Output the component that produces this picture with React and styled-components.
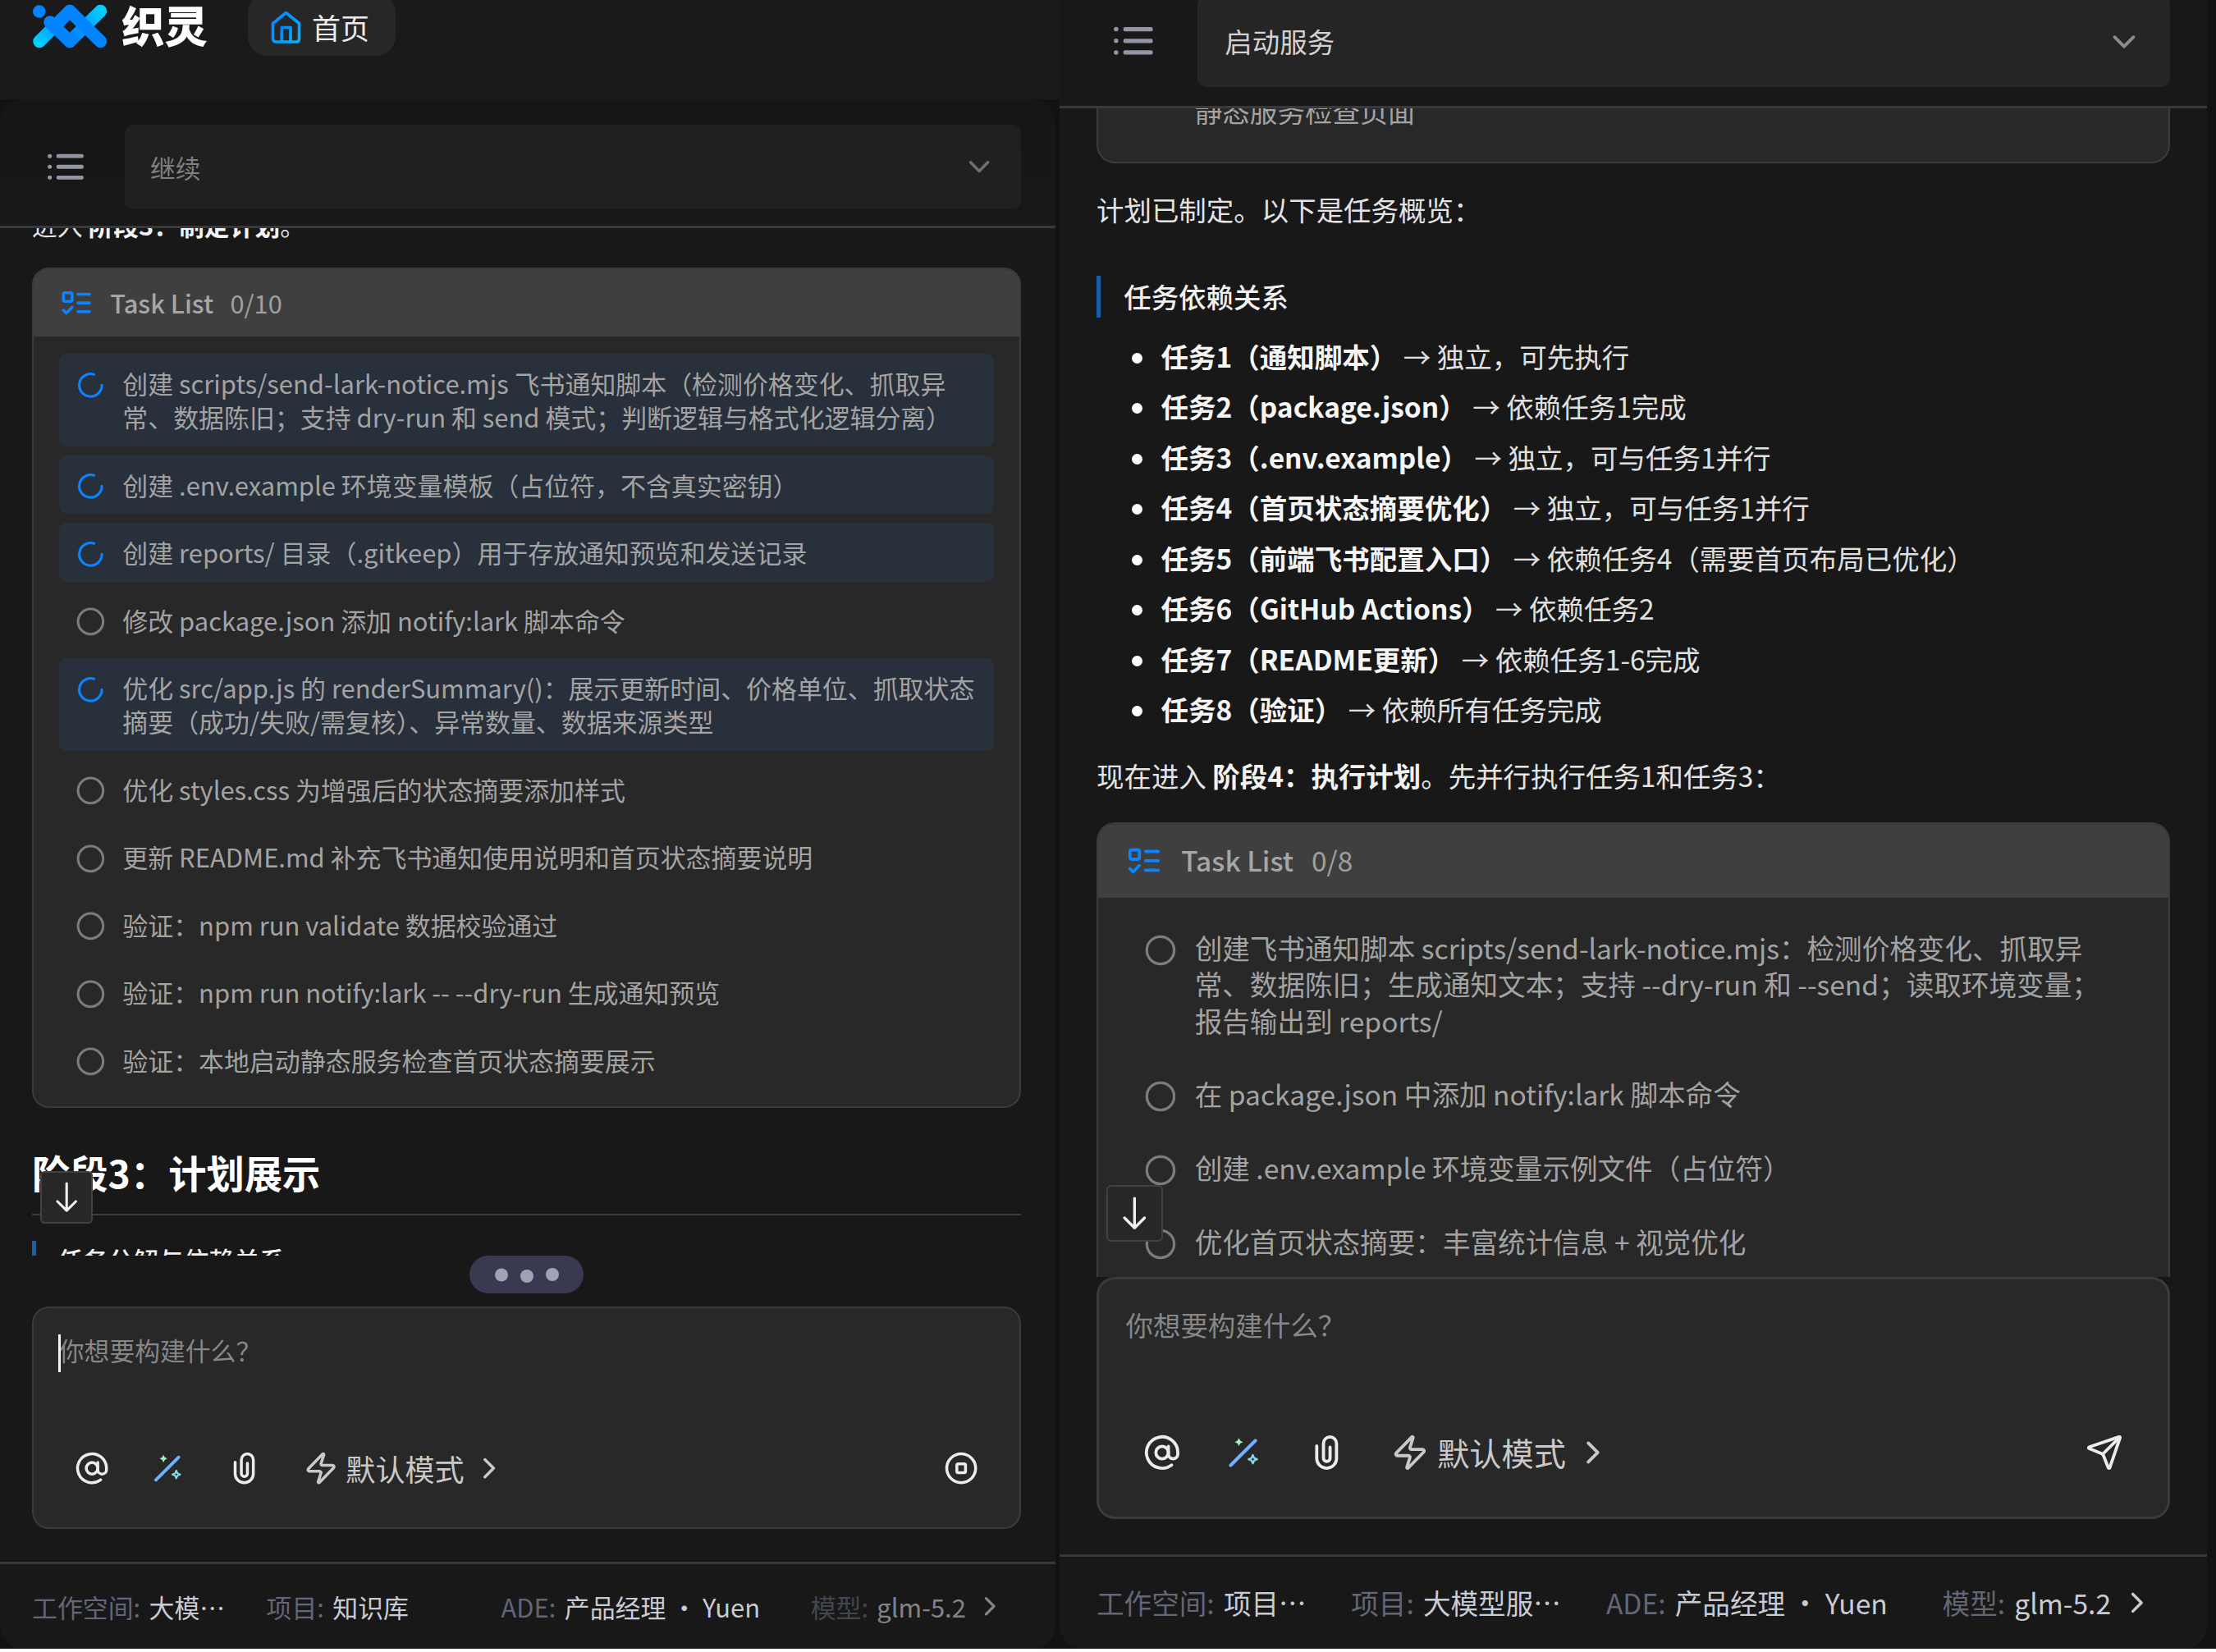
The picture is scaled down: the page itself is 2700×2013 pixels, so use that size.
import React from "react";
import styled, { createGlobalStyle, css, ThemeProvider } from "styled-components";
import {
  AtSign,
  ChevronDown,
  ChevronRight,
  Circle,
  CircleStop,
  LoaderCircle,
  Send,
  Zap,
} from "lucide-react";

/* Every size inside a pane is a multiple of the pane's unit. */
const u = (n) => ({ theme }) => `${(n * theme.unit).toFixed(2)}px`;

const Global = createGlobalStyle`
  *, *::before, *::after { box-sizing: border-box; }
  html, body { margin: 0; padding: 0; background: #fff; overflow: hidden; }
  body { font-family: "Noto Sans CJK SC", "Noto Sans", sans-serif; color: #e6e6e6; }
`;

const Screen = styled.main`
  width: 2700px;
  height: 2009px;
  display: flex;
  gap: 5px;
  overflow: hidden;
  background: #121212;
`;

const LeftColumn = styled.div`
  width: 1286px;
  flex: none;
  display: flex;
  flex-direction: column;
`;

const RightColumn = styled.div`
  width: 1398px;
  height: 2048px;
  flex: none;
  display: flex;
  margin-top: -39px;
`;

const Header = styled.header`
  width: 1291px;
  height: 121px;
  flex: none;
  display: flex;
  align-items: flex-start;
  padding-left: 40px;
  background: #1a1a1a;
`;

const Brand = styled.div`
  display: flex;
  align-items: flex-start;
  gap: 16px;
  height: 64px;
`;

const Wordmark = styled.span`
  font-size: 52.5px;
  font-weight: 900;
  line-height: 59px;
  color: #fff;
`;

const HomePill = styled.a`
  display: flex;
  align-items: center;
  gap: 13px;
  width: 180px;
  height: 76px;
  margin: -8px 0 0 49px;
  padding: 6px 0 0 28px;
  border-radius: 24px;
  background: #272727;
  font-size: 35px;
  line-height: 48px;
  color: #ececec;
`;

const PaneBox = styled.section`
  position: relative;
  flex: 1;
  min-height: 0;
  display: flex;
  flex-direction: column;
  overflow: hidden;
  border-radius: 28px;
  background: #181818;
  font-size: ${u(14)};
  line-height: ${u(18.67)};
`;

const Toolbar = styled.div`
  display: flex;
  align-items: center;
  justify-content: space-between;
  height: ${u(71.4)};
  flex: none;
  padding: ${u(4.8)} ${u(19)} 0 ${({ theme }) => theme.inset}px;
  border-bottom: 3px solid #393939;
  background: ${({ $dim }) => ($dim ? "linear-gradient(#151515, #181818)" : "#181818")};
`;

const ListIcon = styled.svg`
  width: ${u(20)};
  height: ${u(16)};
  margin-left: ${u(8.7)};
`;

const Select = styled.div`
  display: flex;
  align-items: center;
  justify-content: space-between;
  width: ${({ theme }) => theme.select}px;
  height: ${u(46.8)};
  padding: 0 ${u(13.6)} 0 ${u(14.1)};
  border-radius: ${u(4.5)};
  background: ${({ $dim }) => ($dim ? "#202020" : "#252525")};
  color: ${({ $dim }) => ($dim ? "#808080" : "#d2d2d2")};

  svg {
    color: ${({ $dim }) => ($dim ? "#6f6f6f" : "#8c8c8c")};
  }
`;

const iconSize = css`
  width: ${u(19.2)};
  height: ${u(19.2)};
  flex: none;
`;

const SizedIcon = styled.span`
  display: flex;
  svg {
    ${iconSize}
  }
`;

const Scroll = styled.div`
  flex: 1;
  min-height: 0;
  overflow: hidden;
  display: flex;
  flex-direction: column;
  padding: 0 ${u(19)} 0 ${({ theme }) => theme.inset}px;

  > * {
    flex: none;
  }
`;

const Paragraph = styled.p`
  margin: ${({ $top }) => $top}px 0 0;
  color: #e4e4e4;
  white-space: nowrap;

  strong {
    font-weight: 700;
    color: #f2f2f2;
  }
`;

const SectionTitle = styled.h2`
  margin: 48px 0 0;
  padding-bottom: 21px;
  border-bottom: 2px solid #3d3d3d;
  font-size: 46.3px;
  line-height: 60px;
  font-weight: 700;
  color: #fff;
`;

const SubTitle = styled.h3`
  margin: ${({ $top }) => $top}px 0 0;
  padding-left: ${u(11.8)};
  height: ${u(21.2)};
  border-left: 5px solid #1a5eaa;
  font-size: ${u(14)};
  line-height: ${u(21.2)};
  font-weight: 500;
  color: #f0f0f0;
`;

const Bullets = styled.ul`
  list-style: none;
  margin: 17px 0 0;
  padding: 0 0 0 43px;
`;

const Bullet = styled.li`
  display: flex;
  align-items: center;
  gap: 22.5px;
  height: 61.5px;
  white-space: pre;
  font-size: 33.5px;
  color: #e0e0e0;

  &::before {
    content: "";
    width: 13px;
    height: 13px;
    border-radius: 50%;
    background: #fff;
    transform: translateY(2px);
  }

  strong {
    color: #f5f5f5;
  }
`;

const Card = styled.div`
  margin-top: ${({ $top }) => $top}px;
  border: 2px solid #3b3b3b;
  border-radius: ${u(9.4)};
  overflow: hidden;
  background: #282828;
`;

const CardHead = styled.div`
  display: flex;
  align-items: center;
  height: ${u(37.6)};
  padding-left: ${u(14)};
  background: #3f3f3f;
  font-weight: 500;
  color: #a6a6a6;
`;

const TodoIcon = styled.svg`
  ${iconSize}
  color: #0a84ff;
  margin-right: ${u(9.2)};
`;

const Count = styled.span`
  font-weight: 400;
  color: #9f9f9f;
  margin-left: ${u(9.2)};
`;

const CardBody = styled.div`
  display: flex;
  flex-direction: column;
  gap: ${u(5)};
  padding: ${u(9.4)} ${u(14.4)} ${u(9.6)} ${u(14.2)};
`;

const TaskRow = styled.div`
  display: flex;
  gap: ${u(9.2)};
  padding: ${u(6.92)} 0 ${u(6.92)} ${u(9.15)};
  border-radius: ${u(4)};
  background: ${({ $active }) => ($active ? "#28303c" : "transparent")};
  font-size: ${u(14.06)};
  color: #a3a3a3;
  white-space: pre;
`;

const Status = styled.span`
  width: ${u(16.7)};
  height: ${u(16.7)};
  flex: none;
  margin: ${u(2.1)} 0 ${u(-2)};
  color: ${({ $active }) => ($active ? "#0a84ff" : "#7c7c7c")};

  svg {
    display: block;
    width: 100%;
    height: 100%;
  }
`;

const JumpButton = styled.button`
  position: absolute;
  left: ${({ $left }) => $left}px;
  bottom: ${({ $bottom }) => $bottom}px;
  display: flex;
  align-items: center;
  justify-content: center;
  width: ${u(29)};
  height: ${u(29)};
  padding: 0;
  border: 2px solid #424242;
  border-radius: ${u(2.4)};
  background: #272727;

  svg {
    width: ${u(12)};
    height: ${u(17)};
  }
`;

const TypingSlot = styled.div`
  display: flex;
  justify-content: center;
  height: 61.5px;
  flex: none;
  padding-right: 3px;
`;

const TypingPill = styled.div`
  display: flex;
  align-items: center;
  justify-content: center;
  gap: 15px;
  width: 139px;
  height: 46px;
  border-radius: 23px;
  background: #393952;
`;

const Dot = styled.i`
  width: 16px;
  height: 16px;
  border-radius: 50%;
  background: #a0a4b2;
  transform: translateY(${({ $shift }) => $shift}px);
`;

const Composer = styled.div`
  display: flex;
  flex-direction: column;
  justify-content: space-between;
  height: ${u(123.4)};
  flex: none;
  margin: 0 ${u(19)} ${u(18.15)} ${({ theme }) => theme.inset}px;
  padding: ${u(13.7)} ${({ theme }) => (theme.line === 3 ? 53.5 : 50.2)}px ${u(23.1)};
  border: ${({ theme }) => theme.line}px solid #3b3b3b;
  border-radius: ${u(9.4)};
  background: #282828;
`;

const Placeholder = styled.div`
  position: relative;
  margin-left: ${u(-8.8)};
  color: #878787;
`;

const Caret = styled.i`
  position: absolute;
  left: -1px;
  top: 2px;
  width: 3px;
  height: 46px;
  background: #f4f4f4;
`;

const Actions = styled.div`
  display: flex;
  align-items: center;
  gap: ${u(23)};
  height: ${u(19.2)};
  color: #ececec;

  svg {
    display: block;
    ${iconSize}
  }
`;

const Mode = styled.div`
  display: flex;
  align-items: center;
  gap: ${u(4.3)};
  font-size: ${u(16.4)};
  color: #c9c9c9;
`;

const Submit = styled.div`
  margin-left: auto;
`;

const Footer = styled.footer`
  display: grid;
  grid-template-columns: ${u(129.8)} ${u(130)} ${u(171.4)} auto;
  align-items: center;
  height: ${u(48.05)};
  flex: none;
  padding-left: ${({ theme }) => theme.inset}px;
  border-top: 3px solid #383838;
  font-size: ${u(14.05)};
`;

const Info = styled.div`
  display: flex;
  align-items: center;
  gap: ${u(4.7)};
  white-space: pre;
  opacity: ${({ $dim }) => ($dim ? 0.6 : 1)};
  color: #c9cbd4;

  svg {
    width: ${u(17.5)};
    height: ${u(17.5)};
  }
`;

const Label = styled.span`
  color: #626675;
`;

function Logo() {
  return (
    <svg width="92" height="64" viewBox="0 0 92 64" fill="none" strokeWidth="15.5" strokeLinecap="round" strokeLinejoin="round">
      <defs>
        <linearGradient id="armLeft" gradientUnits="userSpaceOnUse" x1="6" y1="52" x2="34" y2="24">
          <stop offset="0" stopColor="#00d0ff" />
          <stop offset="1" stopColor="#0084ff" />
        </linearGradient>
        <linearGradient id="armRight" gradientUnits="userSpaceOnUse" x1="84" y1="12" x2="50" y2="46">
          <stop offset="0" stopColor="#00d0ff" />
          <stop offset="1" stopColor="#0084ff" />
        </linearGradient>
      </defs>
      <circle cx="7.8" cy="14" r="7.8" fill="#0084ff" />
      <path d="M8 50.500 L45 13.500" stroke="url(#armLeft)" />
      <path d="M45 50.500 L82.500 13.500" stroke="url(#armRight)" />
      <path d="M45 13.500 L82.500 50.500" stroke="#0084ff" />
      <path d="M21 27 L45 50.500" stroke="#0084ff" />
    </svg>
  );
}

function HomeIcon() {
  return (
    <svg width="37" height="40" viewBox="0 0 37 40" fill="none" stroke="url(#homeFill)" strokeWidth="3.6" strokeLinejoin="round">
      <defs>
        <linearGradient id="homeFill" x1="0" y1="0" x2="1" y2="1">
          <stop offset="0" stopColor="#0084ff" />
          <stop offset="1" stopColor="#00b4ff" />
        </linearGradient>
      </defs>
      <path d="M2.500 15.500 L18.500 2.500 L34.500 15.500 V34 Q34.500 38 30.500 38 H6.500 Q2.500 38 2.500 34 Z" />
      <path d="M13.200 37 V20.500 H24 V37" />
    </svg>
  );
}

function MenuIcon() {
  return (
    <ListIcon viewBox="0 0 20 16" fill="#9296a4">
      {[1.9, 7.85, 13.8].map((y) => (
        <React.Fragment key={y}>
          <circle cx="1.2" cy={y} r="1.15" />
          <rect x="4.900" y={y - 1.1} width="15" height="2.200" rx="0.800" />
        </React.Fragment>
      ))}
    </ListIcon>
  );
}

function Todo() {
  return (
    <TodoIcon viewBox="0 0 24 24" fill="none" stroke="currentColor" strokeWidth="2" strokeLinecap="round" strokeLinejoin="round">
      <rect x="3" y="5" width="6" height="6" rx="1" />
      <path d="m3 17 2 2 4-4" />
      <path d="M13 6h8" />
      <path d="M13 12h8" />
      <path d="M13 18h8" />
    </TodoIcon>
  );
}

function DownArrow() {
  return (
    <svg viewBox="0 0 12 17" fill="none" stroke="#f0f0f0" strokeWidth="1.400" strokeLinecap="round" strokeLinejoin="round">
      <path d="M6 0.900 V15.900 M0.900 10.900 L6 16 L11.100 10.900" />
    </svg>
  );
}

function WandIcon() {
  return (
    <svg viewBox="0 0 24 24" fill="none">
      <path d="M3.400 20.100 L19.100 4.400" stroke="#6fb0ff" strokeWidth="2.200" strokeLinecap="round" />
      <path d="M8.600 2.700 L9.500 4.400 L11.200 5.300 L9.500 6.200 L8.600 7.900 L7.700 6.200 L6 5.300 L7.700 4.400 Z" fill="#a4efc2" />
      <path d="M17.500 13.600 L18.300 15.500 L20.200 16.300 L18.300 17.100 L17.500 19 L16.700 17.100 L14.800 16.300 L16.700 15.500 Z" stroke="#7fdcf2" strokeWidth="1.200" strokeLinejoin="round" />
    </svg>
  );
}

function ClipIcon() {
  return (
    <svg viewBox="0 0 24 24" fill="none" stroke="currentColor" strokeWidth="2" strokeLinecap="round">
      <path d="M5.400 7.800 V15.700 A6.300 6.300 0 0 0 18 15.700 V6.200 A4.150 4.150 0 0 0 9.700 6.200 V15.600 A2.100 2.100 0 0 0 13.900 15.600 V8.600" />
    </svg>
  );
}

function Task({ active, hideStatus, text }) {
  return (
    <TaskRow $active={active}>
      <Status $active={active}>{hideStatus ? null : active ? <LoaderCircle /> : <Circle />}</Status>
      <span>{text}</span>
    </TaskRow>
  );
}

function TaskCard({ top, count, tasks }) {
  return (
    <Card $top={top}>
      <CardHead>
        <Todo />
        Task List
        <Count>{count}</Count>
      </CardHead>
      <CardBody>
        {tasks.map(([text, active]) => (
          <Task key={text} text={text} active={active} />
        ))}
      </CardBody>
    </Card>
  );
}

function Pane({ theme, dim, title, children, typing, jump, running, info }) {
  return (
    <ThemeProvider theme={theme}>
      <PaneBox>
        <Toolbar $dim={dim}>
          <MenuIcon />
          <Select $dim={dim}>
            {title}
            <SizedIcon>
              <ChevronDown />
            </SizedIcon>
          </Select>
        </Toolbar>
        <Scroll>{children}</Scroll>
        {typing && (
          <TypingSlot>
            <TypingPill>
              <Dot $shift={0.5} />
              <Dot $shift={2} />
              <Dot $shift={0} />
            </TypingPill>
          </TypingSlot>
        )}
        <Composer>
          <Placeholder>
            {running && <Caret />}
            你想要构建什么？
          </Placeholder>
          <Actions>
            <AtSign />
            <WandIcon />
            <ClipIcon />
            <Mode>
              <Zap />
              默认模式
              <ChevronRight />
            </Mode>
            <Submit>{running ? <CircleStop /> : <Send />}</Submit>
          </Actions>
        </Composer>
        <Footer>
          {info.map(([label, value, faded], i) => (
            <Info key={label} $dim={faded}>
              <Label>{label}</Label>
              {value}
              {i === info.length - 1 && <ChevronRight />}
            </Info>
          ))}
        </Footer>
        <JumpButton $left={jump.left} $bottom={jump.bottom}>
          <DownArrow />
        </JumpButton>
      </PaneBox>
    </ThemeProvider>
  );
}

const leftTasks = [
  ["创建 scripts/send-lark-notice.mjs 飞书通知脚本（检测价格变化、抓取异\n常、数据陈旧；支持 dry-run 和 send 模式；判断逻辑与格式化逻辑分离）", true],
  ["创建 .env.example 环境变量模板（占位符，不含真实密钥）", true],
  ["创建 reports/ 目录（.gitkeep）用于存放通知预览和发送记录", true],
  ["修改 package.json 添加 notify:lark 脚本命令", false],
  ["优化 src/app.js 的 renderSummary()：展示更新时间、价格单位、抓取状态\n摘要（成功/失败/需复核）、异常数量、数据来源类型", true],
  ["优化 styles.css 为增强后的状态摘要添加样式", false],
  ["更新 README.md 补充飞书通知使用说明和首页状态摘要说明", false],
  ["验证：npm run validate 数据校验通过", false],
  ["验证：npm run notify:lark -- --dry-run 生成通知预览", false],
  ["验证：本地启动静态服务检查首页状态摘要展示", false],
];

const rightTasks = [
  ["创建飞书通知脚本 scripts/send-lark-notice.mjs：检测价格变化、抓取异\n常、数据陈旧；生成通知文本；支持 --dry-run 和 --send；读取环境变量；\n报告输出到 reports/", false],
  ["在 package.json 中添加 notify:lark 脚本命令", false],
  ["创建 .env.example 环境变量示例文件（占位符）", false],
  ["优化首页状态摘要：丰富统计信息 + 视觉优化", false],
];

const dependencies = [
  ["任务1（通知脚本）", "独立，可先执行"],
  ["任务2（package.json）", "依赖任务1完成"],
  ["任务3（.env.example）", "独立，可与任务1并行"],
  ["任务4（首页状态摘要优化）", "独立，可与任务1并行"],
  ["任务5（前端飞书配置入口）", "依赖任务4（需要首页布局已优化）"],
  ["任务6（GitHub Actions）", "依赖任务2"],
  ["任务7（README更新）", "依赖任务1-6完成"],
  ["任务8（验证）", "依赖所有任务完成"],
];

export default function App() {
  return (
    <>
      <Global />
      <Screen>
        <LeftColumn>
          <Header>
            <Brand>
              <Logo />
              <Wordmark>织灵</Wordmark>
            </Brand>
            <HomePill>
              <HomeIcon />
              首页
            </HomePill>
          </Header>
          <Pane
            theme={{ unit: 2.2, inset: 39, line: 2, select: 1092.3 }}
            dim
            typing
            running
            title="继续"
            jump={{ left: 49, bottom: 518 }}
            info={[
              ["工作空间:", "大模…"],
              ["项目:", "知识库"],
              ["ADE:", "产品经理 • Yuen"],
              ["模型:", "glm-5.2", true],
            ]}
          >
            <Paragraph $top={-25.5}>
              进入 <strong>阶段3：制定计划</strong>。
            </Paragraph>
            <TaskCard top={32} count="0/10" tasks={leftTasks} />
            <SectionTitle>阶段3：计划展示</SectionTitle>
            <SubTitle $top={31}>任务分解与依赖关系</SubTitle>
          </Pane>
        </LeftColumn>
        <RightColumn>
          <Pane
            theme={{ unit: 2.39, inset: 45, line: 3, select: 1185 }}
            title="启动服务"
            jump={{ left: 56.5, bottom: 496 }}
            info={[
              ["工作空间:", "项目…"],
              ["项目:", "大模型服…"],
              ["ADE:", "产品经理 • Yuen"],
              ["模型:", "glm-5.2"],
            ]}
          >
            <Card $top={-60}>
              <CardBody>
                <Task hideStatus text="静态服务检查页面" />
              </CardBody>
            </Card>
            <Paragraph $top={34}>计划已制定。以下是任务概览：</Paragraph>
            <SubTitle $top={58.5}>任务依赖关系</SubTitle>
            <Bullets>
              {dependencies.map(([name, detail]) => (
                <Bullet key={name}>
                  <span>
                    <strong>{name}</strong> → {detail}
                  </span>
                </Bullet>
              ))}
            </Bullets>
            <Paragraph $top={27}>
              现在进入 <strong>阶段4：执行计划</strong>。先并行执行任务1和任务3：
            </Paragraph>
            <TaskCard top={34.5} count="0/8" tasks={rightTasks} />
          </Pane>
        </RightColumn>
      </Screen>
    </>
  );
}
